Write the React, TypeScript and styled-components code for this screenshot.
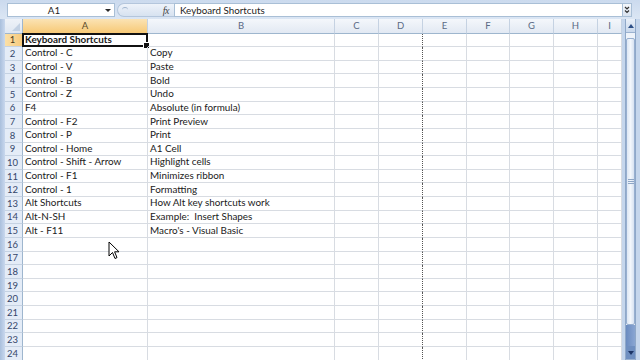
import React from "react";
import styled, { createGlobalStyle } from "styled-components";

const Global = createGlobalStyle`
  html, body { margin: 0; padding: 0; overflow: hidden; }
  body { width: 640px; height: 360px; background: #c5d6ec; }
  * { box-sizing: border-box; }
`;

const Window = styled.div`
  width: 640px;
  height: 360px;
  display: flex;
  flex-direction: column;
  background: #c5d6ec;
  font-family: Lato, "Open Sans", sans-serif;
  position: relative;
  overflow: hidden;
`;

const FormulaBar = styled.div`
  height: 19px;
  display: flex;
  align-items: stretch;
  padding: 3px 8px 2px 7px;
  background: linear-gradient(#cbdaee, #dbe6f4);
`;

const NameBox = styled.div`
  width: 108px;
  background: #fff;
  border: 1px solid #a9bfd6;
  display: flex;
  align-items: center;
  position: relative;
  font-size: 9.8px;
  color: #1e1e1e;
`;

const NameText = styled.span`
  flex: 1;
  text-align: center;
  padding-right: 14px;
`;

const DropArrow = styled.span`
  position: absolute;
  right: 3px;
  top: 5px;
  width: 0;
  height: 0;
  border-left: 3px solid transparent;
  border-right: 3px solid transparent;
  border-top: 3px solid #2a2a2a;
`;

const FxArea = styled.div`
  width: 57px;
  display: flex;
  align-items: center;
  justify-content: flex-end;
  padding-right: 5px;
  border-radius: 8px 0 0 8px;
  background: linear-gradient(#eef3fa, #d7e2f0);
  border: 1px solid #b4c6dc;
  border-right: none;
  margin-left: 2px;
  position: relative;
`;

const Knob = styled.span`
  position: absolute;
  left: 4px;
  top: 3px;
  width: 6px;
  height: 6px;
  border-radius: 50%;
  border-top: 1px solid #9fb4cd;
`;

const Fx = styled.span`
  font-family: "Liberation Serif", serif;
  font-style: italic;
  font-size: 10px;
  color: #444;
  letter-spacing: -0.5px;
`;

const FormulaInput = styled.div`
  flex: 1;
  background: #fff;
  border: 1px solid #a9bfd6;
  display: flex;
  align-items: center;
  padding-left: 5px;
  font-size: 9.8px;
  color: #1e1e1e;
`;

const ExpandBtn = styled.div`
  width: 9px;
  background: linear-gradient(#f4f7fb, #d9e3f0);
  border: 1px solid #a9bfd6;
  border-left: none;
  display: flex;
  align-items: center;
  justify-content: center;
`;

const SheetArea = styled.div`
  flex: 1;
  display: flex;
  min-height: 0;
`;

const LeftStrip = styled.div`
  width: 5px;
  background: linear-gradient(90deg, #a9bfdc, #c9d8ee);
`;

const Grid = styled.div`
  flex: 1;
  display: grid;
  grid-template-columns: 18px 125px 187px 44px 44px 44px 43px 44px 44px 1fr;
  grid-template-rows: 14.5px;
  grid-auto-rows: 13.64px;
  background: #fff;
  overflow: hidden;
  position: relative;
`;

const Corner = styled.div`
  background: linear-gradient(#eef2f8, #dfe7f2);
  border-right: 1px solid #9eb6ce;
  border-bottom: 1px solid #9eb6ce;
  position: relative;
  &::after {
    content: "";
    position: absolute;
    right: 2px;
    bottom: 2px;
    width: 0;
    height: 0;
    border-left: 8px solid transparent;
    border-bottom: 8px solid #c3d1e3;
  }
`;

const ColHead = styled.div<{ $sel?: boolean }>`
  background: ${(p) =>
    p.$sel ? "linear-gradient(#fbe3b4, #f7c976)" : "linear-gradient(#f4f7fb, #e2e9f3)"};
  border-right: 1px solid #c5d2e2;
  border-bottom: 1px solid #9eb6ce;
  display: flex;
  align-items: center;
  justify-content: center;
  font-size: 9.5px;
  color: ${(p) => (p.$sel ? "#5a4a2a" : "#5a6a85")};
`;

const RowHead = styled.div<{ $sel?: boolean }>`
  background: ${(p) => (p.$sel ? "linear-gradient(90deg,#fbe0a8,#f7ca7c)" : "#e4ecf7")};
  border-right: 1px solid #9eb6ce;
  border-bottom: 1px solid #c5d2e2;
  display: flex;
  align-items: center;
  justify-content: center;
  padding-right: 2px;
  font-size: 9.5px;
  color: ${(p) => (p.$sel ? "#4a3a1a" : "#34466a")};
`;

const Cell = styled.div<{ $bold?: boolean; $dash?: boolean }>`
  border-right: ${(p) => (p.$dash ? "1px dotted #555" : "1px solid #d8dce2")};
  border-bottom: 1px solid #d8dce2;
  display: flex;
  align-items: center;
  padding-left: 2px;
  font-size: 9.9px;
  font-weight: ${(p) => (p.$bold ? 700 : 400)};
  color: #1a1a1a;
  white-space: pre;
  overflow: visible;
  position: relative;
  line-height: 1;
`;

const Selection = styled.span`
  position: absolute;
  left: -1px;
  top: -1px;
  right: -1px;
  bottom: -1px;
  border: 2px solid #111;
  pointer-events: none;
  &::after {
    content: "";
    position: absolute;
    right: -4px;
    bottom: -4px;
    width: 5px;
    height: 5px;
    background: #111;
    border: 1px solid #fff;
  }
`;

const Scrollbar = styled.div`
  width: 18px;
  display: flex;
  flex-direction: column;
  background: #c5d6ec;
  padding: 0 4px 0 3px;
`;

const ScrollTrack = styled.div`
  flex: 1;
  display: flex;
  flex-direction: column;
  border-left: 1px solid #8fa8c8;
  border-right: 1px solid #8fa8c8;
  background: #eef3fa;
`;

const ScrollBtn = styled.div<{ $down?: boolean }>`
  height: 14px;
  background: ${(p) => (p.$down ? "#6f8fc0" : "linear-gradient(#e9f0f9, #c9d8ec)")};
  display: flex;
  align-items: center;
  justify-content: center;
  border-bottom: 1px solid #9bb2d0;
`;

const Thumb = styled.div`
  height: 287px;
  margin-top: 5px;
  background: linear-gradient(90deg, #dde7f4, #f3f7fc 50%, #d7e2f1);
  border: 1px solid #97afd0;
  border-radius: 2px;
  display: flex;
  align-items: center;
  justify-content: center;
`;

const Grip = styled.div`
  width: 6px;
  height: 5px;
  background: repeating-linear-gradient(#8ea6c6 0 1px, transparent 1px 2px);
`;

const TrackRest = styled.div`
  flex: 1;
  background: linear-gradient(90deg, #6a8bc0, #8aa6d2);
`;

const Cursor = styled.svg`
  position: absolute;
  left: 108px;
  top: 241px;
  pointer-events: none;
`;

const cols = ["A", "B", "C", "D", "E", "F", "G", "H", "I"];

const data: [string, string][] = [
  ["Keyboard Shortcuts", ""],
  ["Control - C", "Copy"],
  ["Control - V", "Paste"],
  ["Control - B", "Bold"],
  ["Control - Z", "Undo"],
  ["F4", "Absolute (in formula)"],
  ["Control - F2", "Print Preview"],
  ["Control - P", "Print"],
  ["Control - Home", "A1 Cell"],
  ["Control - Shift - Arrow", "Highlight cells"],
  ["Control - F1", "Minimizes ribbon"],
  ["Control - 1", "Formatting"],
  ["Alt Shortcuts", "How Alt key shortcuts work"],
  ["Alt-N-SH", "Example:  Insert Shapes"],
  ["Alt - F11", "Macro's - Visual Basic"],
];

export default function App() {
  const rows = Array.from({ length: 24 }, (_, i) => i + 1);
  return (
    <>
      <Global />
      <Window>
        <FormulaBar>
          <NameBox>
            <NameText>A1</NameText>
            <DropArrow />
          </NameBox>
          <FxArea>
            <Knob />
            <Fx>fx</Fx>
          </FxArea>
          <FormulaInput>Keyboard Shortcuts</FormulaInput>
          <ExpandBtn>
            <svg width="6" height="8" viewBox="0 0 6 8">
              <path d="M1 1 L3 3 L5 1 M1 4.5 L3 6.5 L5 4.5" stroke="#333" strokeWidth="1.2" fill="none" />
            </svg>
          </ExpandBtn>
        </FormulaBar>
        <SheetArea>
          <LeftStrip />
          <Grid>
            <Corner />
            {cols.map((c) => (
              <ColHead key={c} $sel={c === "A"}>
                {c}
              </ColHead>
            ))}
            {rows.map((r) => {
              const d = data[r - 1] || ["", ""];
              return (
                <React.Fragment key={r}>
                  <RowHead $sel={r === 1}>{r}</RowHead>
                  <Cell $bold={r === 1}>
                    {d[0]}
                    {r === 1 && <Selection />}
                  </Cell>
                  <Cell>{d[1]}</Cell>
                  <Cell />
                  <Cell $dash />
                  <Cell />
                  <Cell />
                  <Cell />
                  <Cell />
                  <Cell />
                </React.Fragment>
              );
            })}
          </Grid>
          <Scrollbar>
            <ScrollTrack>
              <ScrollBtn>
                <svg width="6" height="4" viewBox="0 0 6 4">
                  <path d="M0 4 L3 0 L6 4 Z" fill="#2d4f86" />
                </svg>
              </ScrollBtn>
              <Thumb>
                <Grip />
              </Thumb>
              <TrackRest />
              <ScrollBtn $down>
                <svg width="6" height="4" viewBox="0 0 6 4">
                  <path d="M0 0 L3 4 L6 0 Z" fill="#1d3566" />
                </svg>
              </ScrollBtn>
            </ScrollTrack>
          </Scrollbar>
        </SheetArea>
        <Cursor width="12" height="19" viewBox="0 0 12 19">
          <path
            d="M1 1 L1 15 L4.5 11.5 L7 17.5 L9 16.6 L6.6 10.8 L11 10.8 Z"
            fill="#fff"
            stroke="#000"
            strokeWidth="1"
            strokeLinejoin="round"
          />
        </Cursor>
      </Window>
    </>
  );
}
